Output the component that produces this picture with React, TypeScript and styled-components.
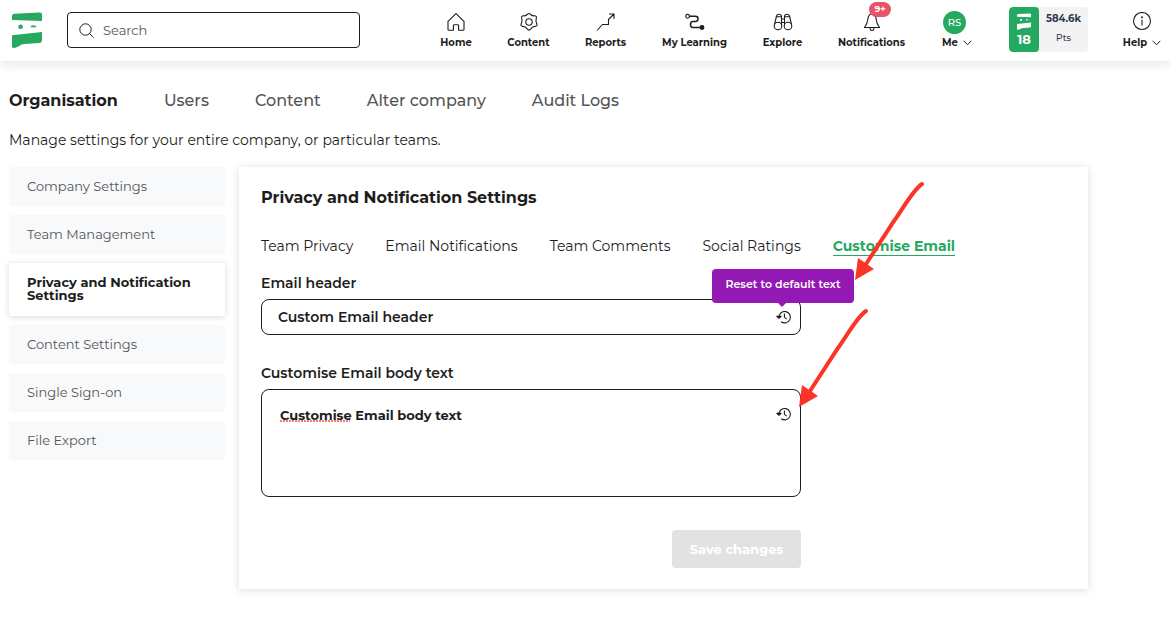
import React from "react";
import styled, { createGlobalStyle, css } from "styled-components";

const ink = "#1d1d1d";
const green = "#25a860";

const GlobalStyle = createGlobalStyle`
  *, *::before, *::after { box-sizing: border-box; }
  body {
    margin: 0;
    background: #fff;
    color: ${ink};
    font-family: Montserrat, Inter, sans-serif;
  }
  button, input, textarea { font-family: inherit; color: inherit; }
  button { border: 0; background: none; padding: 0; cursor: pointer; }
  a { color: inherit; text-decoration: none; }
  h1, p { margin: 0; }
`;

/* ---------- header ---------- */

const Header = styled.header`
  display: flex;
  align-items: flex-start;
  height: 61px;
  padding: 0 11px 0 12px;
  background: #fff;
  box-shadow: 0 4px 10px rgba(20, 60, 50, 0.1);
`;

const Brand = styled.a`
  display: block;
  width: 30px;
  height: 36px;
  margin: 12px 25px 0 0;
  color: ${green};
`;

const SearchBox = styled.label`
  display: flex;
  align-items: center;
  flex: 0 1 293px;
  height: 36px;
  margin-top: 12px;
  padding: 0 11px;
  gap: 9px;
  border: 1px solid ${ink};
  border-radius: 4px;
`;

const SearchInput = styled.input`
  flex: 1;
  min-width: 0;
  border: 0;
  outline: 0;
  padding: 0;
  background: none;
  font-size: 13px;
  &::placeholder { color: #555; opacity: 1; }
`;

const Nav = styled.nav`
  display: flex;
  gap: 36px;
  margin-left: auto;
`;

const NavItem = styled.a<{ $width: number }>`
  position: relative;
  display: flex;
  flex-direction: column;
  align-items: center;
  width: ${(p) => p.$width}px;
  padding-top: 12px;
  font-size: 10px;
  font-weight: 700;
  line-height: 14px;
  white-space: nowrap;
  svg { flex: none; }
`;

const NavLabel = styled.span`
  display: flex;
  align-items: center;
  gap: 5px;
  margin-top: 4px;
`;

const CountBadge = styled.span`
  position: absolute;
  top: 2px;
  left: 31px;
  width: 22px;
  height: 15px;
  border-radius: 8px;
  background: #e75468;
  color: #fff;
  font-size: 9px;
  line-height: 14px;
  text-align: center;
`;

const Avatar = styled.span`
  width: 23px;
  height: 23px;
  margin: -1px 5px -2px 0;
  border-radius: 50%;
  background: ${green};
  color: #fff;
  font-size: 10px;
  font-weight: 500;
  line-height: 23px;
  text-align: center;
`;

const PointsCard = styled.div`
  display: flex;
  width: 79px;
  height: 45px;
  margin-top: 7px;
  border-radius: 4px;
  overflow: hidden;
  background: #f3f3f3;
  color: #2f3a52;
`;

const Level = styled.div`
  display: flex;
  flex-direction: column;
  align-items: center;
  width: 30px;
  padding-top: 6px;
  border-radius: 4px;
  background: ${green};
  color: #fff;
  font-size: 13px;
  font-weight: 700;
  line-height: 18px;
`;

const Points = styled.div`
  flex: 1;
  padding-top: 4px;
  text-align: center;
  font-size: 10px;
  font-weight: 700;
  line-height: 16px;
`;

const PointsUnit = styled.div`
  margin-top: 3px;
  font-size: 9px;
  font-weight: 500;
`;

/* ---------- page ---------- */

const Page = styled.main`
  padding: 28px 83px 47px 9px;
`;

const TopTabs = styled.nav`
  display: flex;
  gap: 46px;
`;

const TopTab = styled.a<{ $active?: boolean }>`
  font-size: 16px;
  line-height: 24px;
  color: ${(p) => (p.$active ? ink : "#555")};
  font-weight: ${(p) => (p.$active ? 700 : 500)};
`;

const Intro = styled.p`
  margin: 17px 0;
  font-size: 14px;
  line-height: 20px;
`;

const Columns = styled.div`
  display: flex;
  align-items: flex-start;
  gap: 14px;
`;

const Sidebar = styled.nav`
  display: flex;
  flex-direction: column;
  gap: 9px;
  flex: 0 0 216px;
`;

const SideLink = styled.a<{ $active?: boolean }>`
  display: flex;
  align-items: center;
  min-height: 39px;
  padding: 0 18px 1px;
  border-radius: 2px;
  background: #f8f9fb;
  color: #555;
  font-size: 13px;
  line-height: 13px;
  ${(p) =>
    p.$active &&
    css`
      min-height: 53px;
      background: #fff;
      color: ${ink};
      font-weight: 700;
      box-shadow: 0 1px 6px rgba(40, 50, 90, 0.18);
    `}
`;

const Panel = styled.section`
  position: relative;
  flex: 1;
  min-width: 0;
  padding: 19px 22px 21px;
  background: #fff;
  box-shadow: 0 1px 8px rgba(40, 50, 90, 0.16);
`;

const PanelTitle = styled.h1`
  font-size: 16px;
  font-weight: 700;
  line-height: 24px;
`;

const SubTabs = styled.nav`
  display: flex;
  gap: 32px;
  margin: 27px 0 17px;
`;

const SubTab = styled.a<{ $active?: boolean }>`
  border-bottom: 1px solid transparent;
  font-size: 14px;
  line-height: 18px;
  white-space: nowrap;
  ${(p) =>
    p.$active &&
    css`
      color: ${green};
      border-color: ${green};
      font-weight: 700;
    `}
`;

const Form = styled.form`
  max-width: 540px;
`;

const FieldLabel = styled.label`
  display: block;
  margin-bottom: 6px;
  font-size: 14px;
  font-weight: 600;
  line-height: 20px;
`;

const Field = styled.div<{ $gap: number }>`
  position: relative;
  display: flex;
  margin-bottom: ${(p) => p.$gap}px;
`;

const fieldFrame = css`
  width: 100%;
  border: 1px solid ${ink};
  border-radius: 8px;
  outline: 0;
  background: #fff;
`;

const HeaderInput = styled.input`
  ${fieldFrame}
  height: 36px;
  padding: 0 40px 0 16px;
  font-size: 14px;
  font-weight: 600;
`;

const BodyInput = styled.textarea`
  ${fieldFrame}
  height: 108px;
  padding: 16px 40px 16px 18px;
  resize: none;
  font-size: 13px;
  font-weight: 700;
  line-height: 18px;
`;

const SpellingMark = styled.span`
  position: absolute;
  top: 31px;
  left: 19px;
  width: 70px;
  height: 2px;
  background: repeating-linear-gradient(90deg, #f47c78 0 2px, transparent 2px 3px);
`;

const ResetButton = styled.button`
  position: absolute;
  top: 17px;
  right: 9px;
  display: block;
  width: 16px;
  height: 16px;
  ${HeaderInput} ~ & { top: 10px; }
`;

const Tooltip = styled.div`
  position: absolute;
  top: -30px;
  right: -53px;
  width: 142px;
  height: 34px;
  border-radius: 4px;
  background: #9418b3;
  color: #fff;
  font-size: 11px;
  font-weight: 600;
  line-height: 31px;
  text-align: center;
  &::after {
    content: "";
    position: absolute;
    top: 100%;
    left: 66px;
    border: 4px solid transparent;
    border-top-color: #9418b3;
    border-bottom: 0;
  }
`;

const Actions = styled.div`
  display: flex;
  justify-content: flex-end;
`;

const SaveButton = styled.button`
  width: 129px;
  height: 38px;
  border-radius: 4px;
  background: #e2e2e2;
  color: #fff;
  font-size: 13px;
  font-weight: 700;
`;

const Annotation = styled.svg`
  position: absolute;
  top: 0;
  left: 0;
  pointer-events: none;
`;

/* ---------- drawings ---------- */

const Mark = ({ width, height }: { width: number; height: number }) => (
  <svg width={width} height={height} viewBox="0 0 30 36" fill="currentColor" aria-hidden="true">
    <path d="M0 4.5Q0 2 2.6 1.8L27 .6Q30 .5 30 3V9L0 8Z" />
    <circle cx="8.6" cy="14.7" r="2.3" />
    <path d="M18.300 15.200Q19 13.300 21.400 13.300T24.600 15.200Z" />
    <path d="M0 23.300 30 20V28Q30 30.800 27 31.100L13 32C7 32.500 6 35.900 2 35.900 .6 35.900 0 35.500 0 34Z" />
  </svg>
);

const Glyph = ({ children }: { children: React.ReactNode }) => (
  <svg
    width="20"
    height="20"
    viewBox="0 0 20 20"
    fill="none"
    stroke={ink}
    strokeWidth="1.1"
    strokeLinecap="round"
    strokeLinejoin="round"
    aria-hidden="true"
  >
    {children}
  </svg>
);

const Chevron = () => (
  <svg width="9" height="6" viewBox="0 0 9 6" fill="none" stroke={ink} aria-hidden="true">
    <path d="M.7 .8 4.500 4.800 8.300 .8" />
  </svg>
);

const History = () => (
  <svg width="16" height="16" viewBox="0 0 16 16" fill="none" stroke={ink} strokeWidth="1.1" aria-hidden="true">
    <path d="M3 8.200A5.700 5.700 0 1 1 5.200 12.700" />
    <path d="M8.400 4.600V8.300L10.700 10.200" />
    <path d="M.8 7.400 3 9.300 5.100 7.400 3.200 7Z" fill={ink} strokeLinejoin="round" />
  </svg>
);

const icons: Record<string, React.ReactNode> = {
  Home: <path d="M2 9.300 10 1.600l8 7.700V17.500q0 .8-.8.8H12.600V13.600q0-.9-.9-.9H8.300q-.9 0-.9.9v4.700H2.800q-.8 0-.8-.8Z" />,
  Content: (
    <>
      <path d="M8.600 2.200Q10 .8 11.400 2.200C12.500 3.600 13.700 4.100 15.300 3.800 17 3.600 17.900 4.700 17.300 6.300 16.600 8.400 16.600 9.900 17.700 11.600 18.500 13.200 17.900 14.400 16.200 14.400 14.200 14.500 13 15.200 11.800 16.800 10.700 18.600 9.300 18.600 8.200 16.800 7 15.200 5.800 14.500 3.800 14.400 2.100 14.400 1.500 13.200 2.300 11.600 3.400 9.900 3.400 8.400 2.700 6.300 2.100 4.700 3 3.600 4.700 3.800 6.300 4.100 7.500 3.600 8.600 2.200Z" />
      <circle cx="10" cy="10" r="3.2" />
    </>
  ),
  Reports: <path d="M1.500 18 6.500 12.500H12.500V7.500L18 2M13.500 2H18V6.500" />,
  "My Learning": (
    <>
      <circle cx="2.6" cy="4.3" r="1.9" />
      <path strokeWidth="1.5" d="M4.500 4.300H10.500Q13 4.300 13 6.800T10.500 9.500H8Q5.500 9.500 5.500 12.500T8 15.500H15" />
      <circle cx="17" cy="15.5" r="1.9" fill={ink} />
    </>
  ),
  Explore: (
    <>
      <circle cx="5" cy="14" r="3.8" />
      <circle cx="15" cy="14" r="3.8" />
      <path d="M1.500 12.500 3.500 4Q4 2.200 6 2.200T8.500 4V13M18.500 12.500 16.500 4Q16 2.200 14 2.200T11.500 4V13M3.500 4.800H8.500M11.500 4.800H16.500M8.500 7H11.500M8.500 10.500H11.500" />
    </>
  ),
  Notifications: (
    <path d="M10 1.500Q13.900 2.500 14.200 7.500 14.600 11.500 17.500 15.500H2.500Q5.400 11.500 5.800 7.500 6.100 2.500 10 1.500ZM8 16.500Q8.500 18.500 10 18.500T12 16.500" />
  ),
};

const navItems = [
  { label: "Home", width: 32 },
  { label: "Content", width: 41 },
  { label: "Reports", width: 41 },
  { label: "My Learning", width: 65 },
  { label: "Explore", width: 39 },
  { label: "Notifications", width: 67, count: "9+" },
];

const topTabs = ["Organisation", "Users", "Content", "Alter company", "Audit Logs"];
const sideLinks = [
  "Company Settings",
  "Team Management",
  "Privacy and Notification Settings",
  "Content Settings",
  "Single Sign-on",
  "File Export",
];
const subTabs = ["Team Privacy", "Email Notifications", "Team Comments", "Social Ratings", "Customise Email"];

export default function App() {
  return (
    <>
      <GlobalStyle />
      <Header>
        <Brand href="#" aria-label="Dashboard">
          <Mark width={30} height={36} />
        </Brand>
        <SearchBox>
          <svg width="15" height="15" viewBox="0 0 15 15" fill="none" stroke={ink} aria-hidden="true">
            <circle cx="6.5" cy="6.5" r="5.7" />
            <path d="M10.600 10.600 14.500 14.500" />
          </svg>
          <SearchInput type="search" placeholder="Search" aria-label="Search" />
        </SearchBox>
        <Nav>
          {navItems.map((item) => (
            <NavItem key={item.label} href="#" $width={item.width}>
              <Glyph>{icons[item.label]}</Glyph>
              <NavLabel>{item.label}</NavLabel>
              {item.count && <CountBadge>{item.count}</CountBadge>}
            </NavItem>
          ))}
          <NavItem href="#" $width={32}>
            <Avatar>RS</Avatar>
            <NavLabel>
              Me <Chevron />
            </NavLabel>
          </NavItem>
          <PointsCard>
            <Level>
              <Mark width={14} height={17} />
              18
            </Level>
            <Points>
              584.6k
              <PointsUnit>Pts</PointsUnit>
            </Points>
          </PointsCard>
          <NavItem href="#" $width={36}>
            <Glyph>
              <circle cx="10" cy="9" r="8.5" />
              <path d="M10 8V13" />
              <circle cx="10" cy="5.2" r=".4" fill={ink} />
            </Glyph>
            <NavLabel>
              Help <Chevron />
            </NavLabel>
          </NavItem>
        </Nav>
      </Header>
      <Page>
        <TopTabs>
          {topTabs.map((tab, i) => (
            <TopTab key={tab} href="#" $active={i === 0}>
              {tab}
            </TopTab>
          ))}
        </TopTabs>
        <Intro>Manage settings for your entire company, or particular teams.</Intro>
        <Columns>
          <Sidebar>
            {sideLinks.map((link, i) => (
              <SideLink key={link} href="#" $active={i === 2}>
                {link}
              </SideLink>
            ))}
          </Sidebar>
          <Panel>
            <PanelTitle>Privacy and Notification Settings</PanelTitle>
            <SubTabs>
              {subTabs.map((tab, i) => (
                <SubTab key={tab} href="#" $active={i === 4}>
                  {tab}
                </SubTab>
              ))}
            </SubTabs>
            <Form>
              <FieldLabel htmlFor="email-header">Email header</FieldLabel>
              <Field $gap={28}>
                <HeaderInput id="email-header" defaultValue="Custom Email header" />
                <ResetButton type="button" aria-label="Reset header">
                  <History />
                </ResetButton>
                <Tooltip role="tooltip">Reset to default text</Tooltip>
              </Field>
              <FieldLabel htmlFor="email-body">Customise Email body text</FieldLabel>
              <Field $gap={33}>
                <BodyInput id="email-body" spellCheck={false} defaultValue="Customise Email body text" />
                <SpellingMark />
                <ResetButton type="button" aria-label="Reset body">
                  <History />
                </ResetButton>
              </Field>
              <Actions>
                <SaveButton type="button" disabled>
                  Save changes
                </SaveButton>
              </Actions>
            </Form>
            <Annotation width="700" height="260" viewBox="0 0 700 260" fill="none" aria-hidden="true">
              <g id="arrow">
                <path
                  d="M683 17C674 23 665 40 655 54L627 97"
                  stroke="#fb3427"
                  strokeWidth="4"
                  strokeLinecap="round"
                />
                <path d="M616 113 619 91 635 102Z" fill="#fb3427" />
              </g>
              <use href="#arrow" x="-56" y="127" />
            </Annotation>
          </Panel>
        </Columns>
      </Page>
    </>
  );
}
